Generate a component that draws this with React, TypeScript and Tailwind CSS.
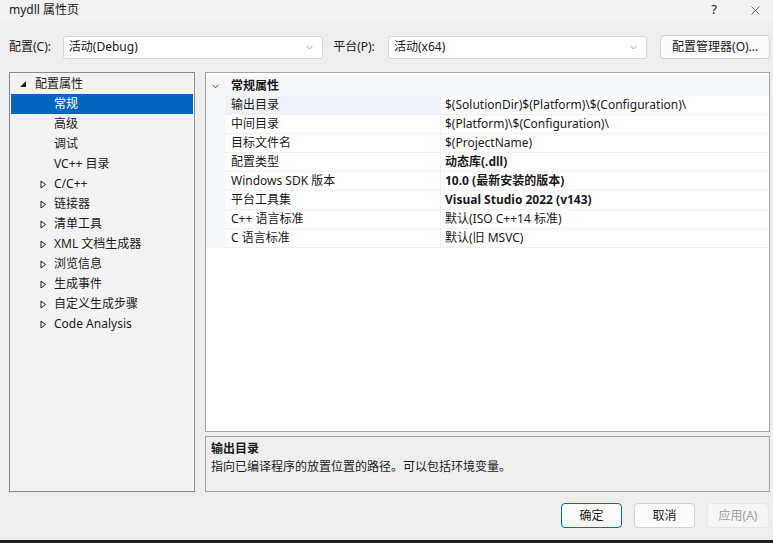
import { ChevronDown, X } from "lucide-react";

const font = { fontFamily: '"Noto Sans", "Noto Sans CJK SC", sans-serif' };

const treeItems = [
  { label: "常规", expander: false, selected: true },
  { label: "高级", expander: false },
  { label: "调试", expander: false },
  { label: "VC++ 目录", expander: false },
  { label: "C/C++", expander: true },
  { label: "链接器", expander: true },
  { label: "清单工具", expander: true },
  { label: "XML 文档生成器", expander: true },
  { label: "浏览信息", expander: true },
  { label: "生成事件", expander: true },
  { label: "自定义生成步骤", expander: true },
  { label: "Code Analysis", expander: true },
];

const props = [
  { name: "输出目录", value: "$(SolutionDir)$(Platform)\\$(Configuration)\\", selected: true },
  { name: "中间目录", value: "$(Platform)\\$(Configuration)\\" },
  { name: "目标文件名", value: "$(ProjectName)" },
  { name: "配置类型", value: "动态库(.dll)", bold: true },
  { name: "Windows SDK 版本", value: "10.0 (最新安装的版本)", bold: true },
  { name: "平台工具集", value: "Visual Studio 2022 (v143)", bold: true },
  { name: "C++ 语言标准", value: "默认(ISO C++14 标准)" },
  { name: "C 语言标准", value: "默认(旧 MSVC)" },
];

function Combo({ value, width }: { value: string; width: string }) {
  return (
    <div
      className={`${width} h-[23px] bg-white border border-[#d5d5d5] rounded-[3px] flex items-center pl-[5px] pr-[7px]`}
    >
      <span className="flex-1 text-[12px] text-[#1a1a1a]">{value}</span>
      <ChevronDown size={11} strokeWidth={1.3} className="text-[#5e5e5e]" />
    </div>
  );
}

function ExpandTriangle() {
  return (
    <svg width="7" height="9" viewBox="0 0 7 9" className="block">
      <path d="M1 1 L5.5 4.5 L1 8 Z" fill="none" stroke="#1e1e1e" strokeWidth="1" />
    </svg>
  );
}

export default function App() {
  return (
    <div className="w-[773px] h-[543px] bg-[#eeeeee] flex flex-col text-[#1a1a1a] overflow-hidden" style={font}>
      {/* Title bar */}
      <div className="h-[20px] flex items-center pl-[9px] pr-[10px] bg-[#f2f2f2]">
        <span className="text-[12px] flex-1">mydll 属性页</span>
        <span className="text-[13px] mr-[31px]">?</span>
        <X size={15} strokeWidth={1} className="text-[#1a1a1a]" />
      </div>

      {/* Config row */}
      <div className="mt-[15px] h-[24px] flex items-center pl-[9px] pr-[3px]">
        <span className="text-[12px] w-[54px]">配置(C):</span>
        <Combo value="活动(Debug)" width="w-[261px]" />
        <span className="text-[12px] ml-[10px] w-[55px]">平台(P):</span>
        <Combo value="活动(x64)" width="w-[260px]" />
        <div className="ml-[13px] w-[110px] h-[24px] bg-[#fbfbfb] border border-[#d0d0d0] rounded-[4px] flex items-center justify-center text-[12px]">
          配置管理器(O)...
        </div>
      </div>

      {/* Main area */}
      <div className="mt-[13px] h-[420px] flex pl-[9px] pr-[3px] gap-[10px]">
        {/* Tree */}
        <div className="w-[186px] h-[420px] border border-[#8b8b92] bg-[#f3f3f3] px-[1px] pt-[1px]">
          <div className="h-[20px] flex items-center text-[12px]">
            <svg width="6" height="6" viewBox="0 0 6 6" className="ml-[9px] mr-[9px]">
              <path d="M6 0 L6 6 L0 6 Z" fill="#1e1e1e" />
            </svg>
            配置属性
          </div>
          {treeItems.map((it) => (
            <div
              key={it.label}
              className={`h-[20px] flex items-center text-[12px] ${
                it.selected ? "bg-[#0067c0] text-white" : ""
              }`}
            >
              <div className="w-[43px] flex justify-end pr-[7px]">{it.expander && <ExpandTriangle />}</div>
              {it.label}
            </div>
          ))}
        </div>

        {/* Right column */}
        <div className="flex-1 flex flex-col gap-[4px]">
          <div className="h-[360px] border border-[#a3a3a3] bg-white pt-[3px]">
            <div className="h-[20px] flex items-center bg-[#f5f7fa]">
              <div className="w-[19px] flex justify-center">
                <ChevronDown size={11} strokeWidth={2} className="text-[#333]" />
              </div>
              <span className="text-[12px] font-bold pl-[6px]">常规属性</span>
            </div>
            {props.map((p) => (
              <div key={p.name} className="h-[19px] flex">
                <div className="w-[19px] bg-[#f5f7fa]" />
                <div
                  className={`w-[216px] flex items-center pl-[6px] text-[12px] border-b border-r border-[#eef0f3] ${
                    p.selected ? "bg-[#eef1f6]" : "bg-white"
                  }`}
                >
                  {p.name}
                </div>
                <div
                  className={`flex-1 flex items-center pl-[4px] text-[12px] border-b border-[#eef0f3] ${
                    p.bold ? "font-bold" : ""
                  }`}
                >
                  {p.value}
                </div>
              </div>
            ))}
          </div>
          <div className="flex-1 border border-[#a3a3a3] bg-[#efefef] px-[5px] pt-[3px]">
            <div className="text-[12px] font-bold leading-[18px]">输出目录</div>
            <div className="text-[12px] leading-[18px]">指向已编译程序的放置位置的路径。可以包括环境变量。</div>
          </div>
        </div>
      </div>

      {/* Buttons */}
      <div className="mt-[11px] h-[25px] flex justify-end gap-[12px] pr-[4px]">
        <div className="w-[61px] h-[25px] bg-[#fbfbfb] border border-[#0067c0] rounded-[4px] flex items-center justify-center text-[12px]">
          确定
        </div>
        <div className="w-[61px] h-[25px] bg-[#fbfbfb] border border-[#d0d0d0] rounded-[4px] flex items-center justify-center text-[12px]">
          取消
        </div>
        <div className="w-[62px] h-[25px] bg-[#f5f5f5] border border-[#e5e5e5] rounded-[4px] flex items-center justify-center text-[12px] text-[#9d9d9d]">
          应用(A)
        </div>
      </div>

      <div className="mt-auto h-[3px] bg-[#1f1f1f]" />
    </div>
  );
}
